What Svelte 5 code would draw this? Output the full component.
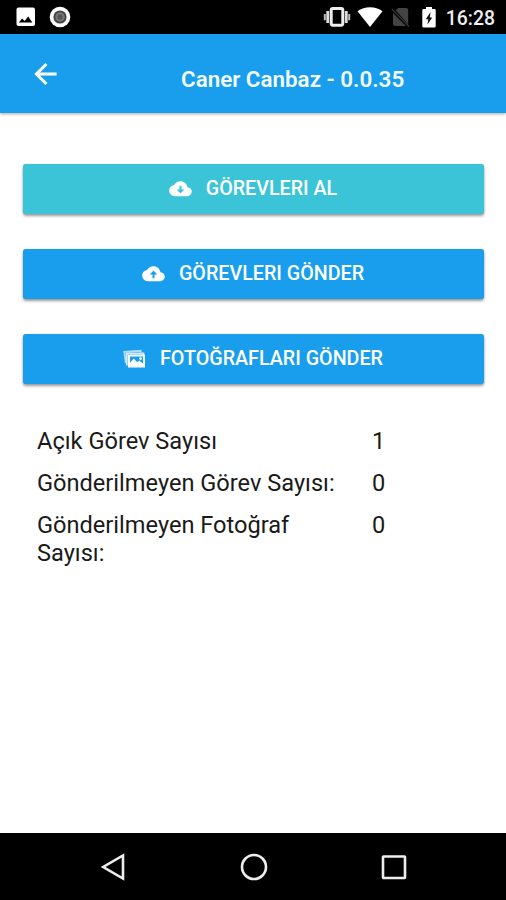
<script>
  const actions = [
    { id: 'download', label: 'GÖREVLERI AL' },
    { id: 'upload', label: 'GÖREVLERI GÖNDER' },
    { id: 'photos', label: 'FOTOĞRAFLARI GÖNDER' }
  ];

  const counts = [
    ['Açık Görev Sayısı', 1],
    ['Gönderilmeyen Görev Sayısı:', 0],
    ['Gönderilmeyen Fotoğraf Sayısı:', 0]
  ];
</script>

<div class="screen">
  <div class="status">
    <svg class="picture" width="20" height="20" viewBox="0 0 20 20" aria-hidden="true">
      <rect x="0.5" y="0.5" width="18.5" height="18.5" rx="2" fill="#fff" />
      <path d="M2.8 15.5 6.2 11.4 8.6 14 12.2 9.6 16.4 15.5Z" fill="#000" />
    </svg>
    <svg width="22" height="22" viewBox="0 0 22 22" aria-hidden="true">
      <circle cx="11" cy="11" r="10.3" fill="#fff" />
      <circle cx="11" cy="11" r="6.6" fill="#444" />
      <circle cx="11" cy="11" r="4.7" fill="#777" />
      <circle cx="11" cy="11" r="2.7" fill="#555" />
    </svg>
    <div class="status-right">
      <svg class="vibrate" width="28" height="22" viewBox="0 0 28 22" aria-hidden="true">
        <rect x="8.2" y="2.4" width="11.6" height="16.8" rx="1.6" fill="none" stroke="#eee" stroke-width="3" />
        <path d="M4.7 5v12M23.3 5v12" stroke="#ddd" stroke-width="2.8" />
        <path d="M1.8 8v6.2M26.2 8v6.2" stroke="#bbb" stroke-width="2" />
      </svg>
      <svg class="wifi" width="26" height="20" viewBox="0 0 26 20" aria-hidden="true">
        <path d="M0.5 4.2C7.5-1.2 18.5-1.2 25.5 4.2L13 20Z" fill="#fff" />
      </svg>
      <svg class="sim" width="19" height="21" viewBox="0 0 19 21" aria-hidden="true">
        <path d="M7 1h8.2a2 2 0 0 1 2 2v14.5L4.7 3.3ZM2 6 15 19H4a2 2 0 0 1-2-2Z" fill="#444" />
        <path d="M0.9 2 18 19.5" stroke="#333" stroke-width="1.5" />
      </svg>
      <svg class="battery" width="14" height="21" viewBox="0 0 14 21" aria-hidden="true">
        <path d="M4 0h6v2h2.4a1.3 1.3 0 0 1 1.3 1.3v16a1.3 1.3 0 0 1-1.3 1.3H1.6a1.3 1.3 0 0 1-1.3-1.3v-16A1.3 1.3 0 0 1 1.6 2H4Z" fill="#fff" />
        <path d="M8.6 5 3.7 12.2h2.6L5.4 17.4l4.9-6.8H7.8Z" fill="#111" />
      </svg>
      <span class="clock">16:28</span>
    </div>
  </div>

  <header>
    <button class="back" aria-label="Geri">
      <svg width="24" height="24" viewBox="0 0 24 24" aria-hidden="true">
        <path d="M13.4 2 3.4 12l10 10M3.6 12H23.6" fill="none" stroke="#fff" stroke-width="3" />
      </svg>
    </button>
    <h1>Caner Canbaz - 0.0.35</h1>
  </header>

  <main>
    <div class="actions">
      {#each actions as action}
        <button class="action" class:teal={action.id === 'download'}>
          {#if action.id === 'photos'}
            <svg width="23" height="20" viewBox="0 0 23 20" aria-hidden="true">
              <path d="M2.8 14 1.3 2.8 17.6 1.8l.2 1.6" fill="none" stroke="#b5ddfa" stroke-width="1.8" />
              <path d="M3.8 16.5V4.3h16.6v2" fill="none" stroke="#d5ecfd" stroke-width="1.8" />
              <path fill-rule="evenodd" d="M5 5.6H22V18.4H5ZM7 7.6v6.2l3.8-4.3 3.4 3.8 2.1-1.8 3.7 2.9V7.6Z" fill="#fff" />
              <circle cx="17.6" cy="9.6" r="1.3" fill="#fff" />
            </svg>
          {:else}
            <svg width="23" height="20" viewBox="0 0 23 20" aria-hidden="true">
              <path d="M18.5 8.2C17.8 4.8 15 2.2 11.5 2.2 8.7 2.2 6.3 3.7 5.1 6 2.3 6.4.2 8.7.2 11.5c0 3.2 2.5 5.7 5.7 5.7h12.3c2.6 0 4.6-2 4.6-4.6 0-2.4-1.9-4.3-4.3-4.4Z" fill="#fff" />
              {#if action.id === 'download'}
                <path d="M10.5 6.8h2v3.8h2.8l-3.8 3.8-3.8-3.8h2.8Z" fill="#3bc3d7" />
              {:else}
                <path d="M10.5 14.2h2v-3.8h2.8l-3.8-3.8-3.8 3.8h2.8Z" fill="#189eec" />
              {/if}
            </svg>
          {/if}
          <span>{action.label}</span>
        </button>
      {/each}
    </div>

    <dl>
      {#each counts as [label, value]}
        <div class="row">
          <dt>{label}</dt>
          <dd>{value}</dd>
        </div>
      {/each}
    </dl>
  </main>

  <nav>
    <svg width="28" height="32" viewBox="0 0 28 32" aria-hidden="true">
      <path d="M24 4.4v23.2L4.2 16Z" />
    </svg>
    <svg width="28" height="32" viewBox="0 0 28 32" aria-hidden="true">
      <circle cx="14" cy="16" r="12" />
    </svg>
    <svg width="28" height="32" viewBox="0 0 28 32" aria-hidden="true">
      <rect x="3" y="5.5" width="22" height="21.5" rx="0.5" />
    </svg>
  </nav>
</div>

<style>
  :global(body) { background: #fff; }
  .screen {
    display: flex;
    flex-direction: column;
    height: 900px;
    overflow: hidden;
    font-family: Roboto, sans-serif;
    color: #1a1a1a;
  }
  svg { display: block; flex: none; }
  .status {
    display: flex;
    align-items: center;
    box-sizing: border-box;
    height: 34px;
    padding: 0 11px 0 16px;
    background: #000;
  }
  .picture { margin-right: 13px; }
  .status-right { display: flex; align-items: center; margin-left: auto; }
  .vibrate { margin-right: 6px; }
  .wifi { margin-right: 8px; }
  .sim { margin-right: 12px; }
  .battery { margin-right: 10px; }
  .clock {
    color: #eee;
    font-size: 19.4px;
    font-weight: 500;
    line-height: 34px;
    padding-top: 3px;
  }
  header {
    display: flex;
    align-items: center;
    box-sizing: border-box;
    height: 79px;
    padding-left: 33px;
    background: #189eec;
    box-shadow: 0 1px 3px rgba(0, 0, 0, 0.35);
  }
  button {
    border: 0;
    padding: 0;
    font: inherit;
    color: #fff;
    background: none;
  }
  .back { width: 148px; }
  h1 {
    margin: 11px 0 0;
    font-size: 22.4px;
    font-weight: 600;
    line-height: 26px;
    color: #f2faff;
    white-space: nowrap;
  }
  main { flex: 1; padding: 51px 22px 0 23px; }
  .actions { display: grid; gap: 35px; }
  .action {
    display: flex;
    align-items: center;
    justify-content: center;
    gap: 14px;
    height: 50px;
    padding-bottom: 1px;
    border-radius: 3px;
    background: #189eec;
    box-shadow: 0 2px 3px rgba(0, 0, 0, 0.4), 0 0 1px rgba(0, 0, 0, 0.25);
    font-size: 19.7px;
    font-weight: 500;
    line-height: 25px;
    white-space: nowrap;
  }
  .action.teal { background: #3bc3d7; }
  .action span { margin-right: 1px; }
  dl { margin: 43px 0 0 14px; }
  .row {
    display: grid;
    grid-template-columns: 335px 1fr;
    margin-bottom: 14px;
    font-size: 23.6px;
    line-height: 28px;
  }
  dt { padding-right: 30px; }
  dd { margin: 0; }
  nav {
    display: flex;
    align-items: center;
    justify-content: space-between;
    box-sizing: border-box;
    height: 67px;
    padding: 0 98px 0 99px;
    background: #000;
  }
  nav svg { fill: none; stroke: #eee; stroke-width: 2.6; }
</style>
